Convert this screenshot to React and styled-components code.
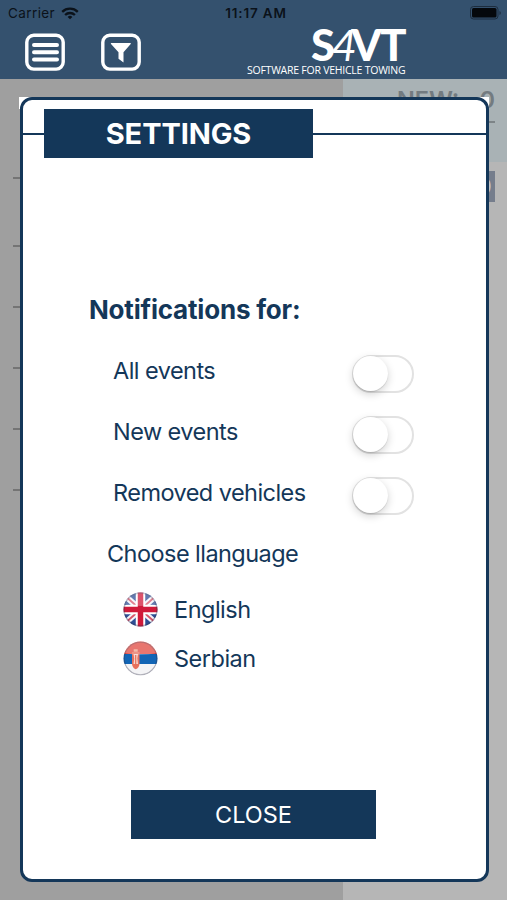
import React from 'react'
import styled, { createGlobalStyle } from 'styled-components'

const navy = '#143759'

const GlobalStyle = createGlobalStyle`
    * {
        box-sizing: border-box;
    }

    body {
        margin: 0;
        font-family: Inter, "Liberation Sans", sans-serif;
        color: ${navy};
    }
`

const Screen = styled.div`
    position: relative;
    width: 507px;
    height: 900px;
    overflow: hidden;
    display: flex;
    flex-direction: column;
    background-color: #b6b6b6;
`

const Header = styled.header`
    height: 79px;
    background-color: #34516e;
`

const StatusBar = styled.div`
    display: grid;
    grid-template-columns: 1fr auto 1fr;
    align-items: center;
    height: 27px;
    padding: 0 6px 0 8px;
    color: #0b121a;
    font-size: 13.5px;
    line-height: 27px;
`

const Carrier = styled.div`
    display: flex;
    align-items: center;
    gap: 6px;
    letter-spacing: 0.4px;
`

const Clock = styled.div`
    font-size: 13.5px;
    font-weight: 600;
    letter-spacing: 0.8px;
    padding-left: 3px;
`

const Battery = styled.svg`
    justify-self: end;
    margin-top: -1px;
`

const NavBar = styled.div`
    display: flex;
    align-items: flex-start;
    padding-left: 25px;
`

const IconButton = styled.button`
    display: block;
    width: 40px;
    height: 38px;
    margin: 6px 36px 0 0;
    padding: 0;
    border: 0;
    background: none;
`

const Logo = styled.div`
    width: 160px;
    margin: 0 0 0 70px;
    color: #fff;
    font-family: "Open Sans", "Noto Sans", sans-serif;
`

const Wordmark = styled.div`
    display: flex;
    padding-left: 64px;
    height: 37px;
    font-family: Lato, sans-serif;
    font-size: 43.5px;
    font-weight: 900;
    line-height: 35px;
    letter-spacing: -1.5px;
`

const Four = styled.span`
    margin: 0 -4px 0 -2px;
    font-style: italic;
    font-weight: 400;
`

const Tagline = styled.div`
    font-size: 10.5px;
    line-height: 12px;
    letter-spacing: -0.24px;
    white-space: nowrap;
`

const Page = styled.main`
    flex: 1;
    display: grid;
    grid-template-columns: 343px 1fr;
`

const Sidebar = styled.div`
    background-color: #9f9f9f;
    padding: 98px 0 0 13px;
`

const Tick = styled.div`
    height: 2px;
    margin-bottom: ${(props) => props.$gap}px;
    background-color: #747474;
`

const Summary = styled.div`
    height: 83px;
    padding: 7px 12px 0 54px;
    background-color: #a9b2b5;
`

const Counter = styled.div`
    display: flex;
    justify-content: space-between;
    height: 37px;
    border-bottom: 2px solid #7d8487;
    color: #737b80;
    font-size: 23.5px;
    font-weight: 600;
    line-height: 28px;
`

const Badge = styled.div`
    width: 30px;
    height: 31px;
    margin: 9px 12px 0 auto;
    background-color: #757d8c;
    color: #c3c6cc;
    font-size: 22px;
    line-height: 31px;
    text-align: right;
    padding-right: 3px;
`

const Overlay = styled.div`
    position: absolute;
    inset: 97px 18px 18px 19px;
    background: linear-gradient(#fff, #fff) no-repeat 0 0 / 100% 12px;
`

const Modal = styled.section`
    height: 785px;
    margin-left: 1px;
    border: 3px solid ${navy};
    border-radius: 12px;
    background-color: #fff;
    display: flex;
    flex-direction: column;
`

const TitleRow = styled.div`
    display: flex;
    align-items: center;
    margin-top: 9px;

    &::before,
    &::after {
        content: '';
        height: 2px;
        width: 21px;
        background-color: ${navy};
    }

    &::after {
        flex: 1;
        width: auto;
    }
`

const Title = styled.h1`
    width: 269px;
    height: 49px;
    margin: 0;
    background-color: ${navy};
    color: #fff;
    font-size: 29px;
    font-weight: 700;
    line-height: 50px;
    letter-spacing: -0.1px;
    text-align: center;
`

const Heading = styled.h2`
    margin: 132px 0 10px 66px;
    font-size: 26px;
    font-weight: 700;
    line-height: 40px;
    letter-spacing: -0.2px;
`

const Row = styled.label`
    display: flex;
    align-items: center;
    justify-content: space-between;
    height: 61px;
    padding: 0 72px 0 90px;
    font-size: 23.5px;
    letter-spacing: -0.55px;
`

const Switch = styled.span`
    width: 62px;
    height: 38px;
    margin-top: 7px;
    border: 2px solid #e2e2e2;
    border-radius: 19px;
`

const Knob = styled.span`
    display: block;
    width: 35px;
    height: 35px;
    margin: -1px 0 0 -1px;
    border-radius: 50%;
    background-color: #fff;
    box-shadow: 0 3px 8px rgba(0, 0, 0, 0.18), 0 1px 1px rgba(0, 0, 0, 0.12);
`

const SubHeading = styled.div`
    margin: 0 0 1px 84px;
    font-size: 23.5px;
    line-height: 61px;
    letter-spacing: -0.55px;
`

const Language = styled.div`
    display: flex;
    align-items: center;
    gap: 16px;
    height: 49px;
    margin-left: 100px;
    font-size: 23.5px;
    letter-spacing: -0.5px;
`

const CloseButton = styled.button`
    width: 245px;
    height: 49px;
    margin: 107px 0 0 108px;
    padding: 0;
    border: 0;
    background-color: ${navy};
    color: #fff;
    font-family: inherit;
    font-size: 23.5px;
    line-height: 49px;
`

const WifiIcon = () => (
    <svg width="18" height="13" viewBox="0 0 18 13" fill="none" stroke="#0b121a" strokeWidth="2.3">
        <path d="M1.2 4.8a11.2 11.2 0 0 1 15.6 0" />
        <path d="M4.1 8a7 7 0 0 1 9.8 0" />
        <path d="M9 12.3 6.6 9.9a3.5 3.5 0 0 1 4.8 0z" fill="#0b121a" stroke="none" />
    </svg>
)

const MenuIcon = () => (
    <svg width="40" height="38" viewBox="0 0 40 38" fill="none" stroke="#fff">
        <rect x="1.8" y="2.3" width="36.4" height="33.8" rx="7" strokeWidth="3.4" />
        <path d="M9 12h23M9 19.3h23M9 26.6h23" strokeWidth="4" strokeLinecap="round" />
    </svg>
)

const FilterIcon = () => (
    <svg width="40" height="38" viewBox="0 0 40 38" fill="none" stroke="#fff">
        <rect x="1.8" y="2.3" width="36.4" height="33.8" rx="7" strokeWidth="3.4" />
        <path d="M10.3 10h19q1 0 .4 1l-7.2 8.2v10.3l-5-3.8v-6.5l-7.5-8.2q-.6-1 .3-1z" fill="#fff" stroke="none" />
    </svg>
)

const Gloss = () => (
    <>
        <circle cx="17.5" cy="17.5" r="16.4" fill="none" stroke="#35354a" strokeOpacity="0.35" strokeWidth="1.4" />
        <path d="M2 12a15.6 15.6 0 0 1 31 0q-15 4-31 0z" fill="#fff" fillOpacity="0.25" />
    </>
)

const EnglishFlag = () => (
    <svg width="35" height="35" viewBox="0 0 35 35">
        <clipPath id="en"><circle cx="17.5" cy="17.5" r="17" /></clipPath>
        <g clipPath="url(#en)">
            <path fill="#2f4f96" d="M0 0h35v35H0z" />
            <path d="M1 3l33 29M34 3L1 32" stroke="#f4f4fa" strokeWidth="6" />
            <path d="M1 3l33 29M34 3L1 32" stroke="#d9566a" strokeWidth="1.8" />
            <path d="M17.5 0v35M0 17.5h35" stroke="#fff" strokeWidth="9.5" />
            <path d="M17.5 0v35M0 17.5h35" stroke="#d01a3a" strokeWidth="5.5" />
            <Gloss />
        </g>
    </svg>
)

const SerbianFlag = () => (
    <svg width="35" height="35" viewBox="0 0 35 35">
        <clipPath id="sr"><circle cx="17.5" cy="17.5" r="17" /></clipPath>
        <g clipPath="url(#sr)">
            <path fill="#f4f4f6" d="M0 0h35v35H0z" />
            <path fill="#e0483f" d="M0 0h35v13H0z" />
            <path fill="#1265b5" d="M0 13h35v10H0z" />
            <path fill="#e8705c" d="M9 11h7.5v12q-.4 4-3.8 5.2Q9.4 27 9 23z" />
            <path fill="#fff" fillOpacity="0.7" d="M10.5 13h4.5l-.7 4.5.7 5.5h-4.5l.7-5.5z" />
            <path d="M10.7 9.5h4" stroke="#f0a58c" strokeWidth="2.4" />
            <path d="M12.7 14v11" stroke="#e0705c" strokeWidth="1.2" />
            <Gloss />
        </g>
    </svg>
)

const events = ['All events', 'New events', 'Removed vehicles']

const ticks = [66, 59, 59, 59, 59, 0]

const App = () => {
  return (
    <Screen>
        <GlobalStyle />
        <Header>
            <StatusBar>
                <Carrier>
                    Carrier
                    <WifiIcon />
                </Carrier>
                <Clock>11:17 AM</Clock>
                <Battery width="31" height="14" viewBox="0 0 31 14">
                    <rect x="0.5" y="0.5" width="27.5" height="12.5" rx="3" fill="none" stroke="#1d2d3e" />
                    <rect x="2" y="2" width="24.5" height="9.5" rx="1.5" fill="#05080c" />
                    <path d="M29.5 5v4q1.3-.6 1.3-2t-1.3-2z" fill="#1d2d3e" />
                </Battery>
            </StatusBar>
            <NavBar>
                <IconButton><MenuIcon /></IconButton>
                <IconButton><FilterIcon /></IconButton>
                <Logo>
                    <Wordmark>
                        <span>S</span>
                        <Four>4</Four>
                        <span>VT</span>
                    </Wordmark>
                    <Tagline>SOFTWARE FOR VEHICLE TOWING</Tagline>
                </Logo>
            </NavBar>
        </Header>
        <Page>
            <Sidebar>
                {ticks.map((gap, i) => (
                    <Tick key={i} $gap={gap} />
                ))}
            </Sidebar>
            <div>
                <Summary>
                    <Counter>
                        <span>NEW:</span>
                        <span>0</span>
                    </Counter>
                </Summary>
                <Badge>0</Badge>
            </div>
        </Page>
        <Overlay>
            <Modal>
                <TitleRow>
                    <Title>SETTINGS</Title>
                </TitleRow>
                <Heading>Notifications for:</Heading>
                {events.map((name) => (
                    <Row key={name}>
                        {name}
                        <Switch><Knob /></Switch>
                    </Row>
                ))}
                <SubHeading>Choose llanguage</SubHeading>
                <Language>
                    <EnglishFlag />
                    English
                </Language>
                <Language>
                    <SerbianFlag />
                    Serbian
                </Language>
                <CloseButton>CLOSE</CloseButton>
            </Modal>
        </Overlay>
    </Screen>
  )
}

export default App
